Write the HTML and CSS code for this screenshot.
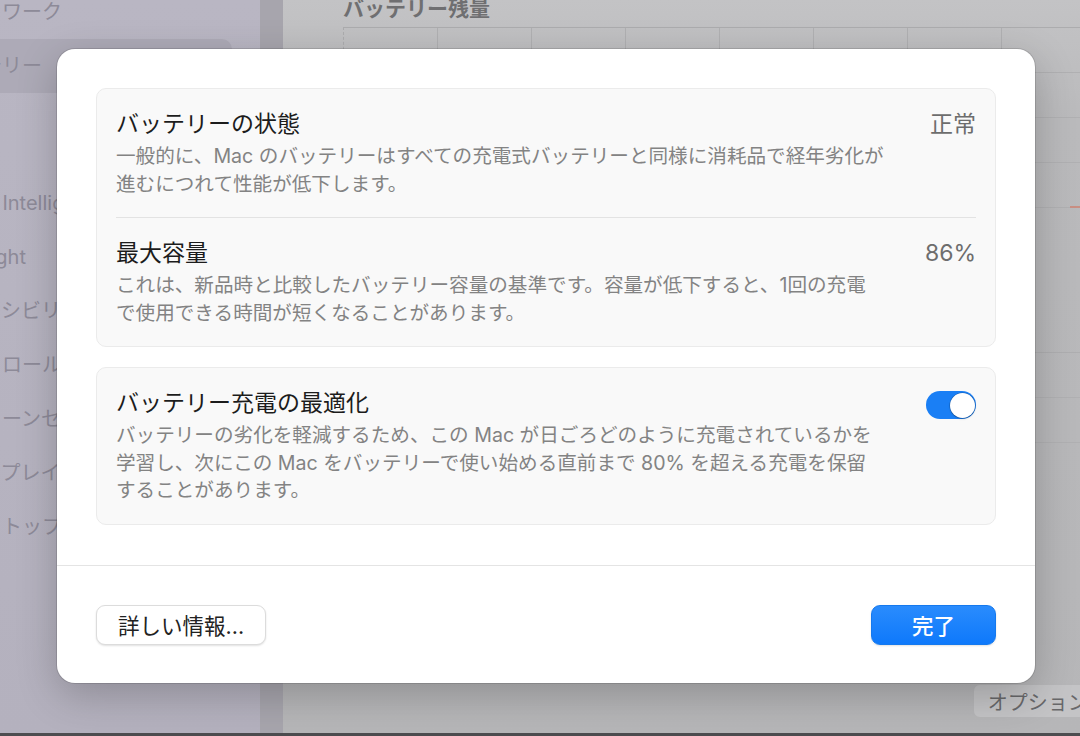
FILE: index.html
```html
<!doctype html>
<html lang="ja">
<head>
<meta charset="UTF-8">
<meta name="viewport" content="width=device-width, initial-scale=1">
<title>バッテリーの状態</title>
<link rel="stylesheet" href="styles.css">
</head>
<body>
<div class="window">
    <aside class="sidebar">
        <div class="side-list">
            <div class="side-item">ネットワーク</div>
            <div class="side-item selected">バッテリー</div>
            <div class="side-gap"></div>
            <div class="side-item">Apple Intelligence</div>
            <div class="side-item">Spotlight</div>
            <div class="side-item">アクセシビリティ</div>
            <div class="side-item">コントロールセンター</div>
            <div class="side-item">スクリーンセーバ</div>
            <div class="side-item">ディスプレイ</div>
            <div class="side-item">デスクトップとDock</div>
        </div>
    </aside>
    <div class="split"></div>
    <main class="content">
        <h2 class="content-title">バッテリー残量</h2>
        <div class="chart">
            <div class="chart-row"></div>
            <div class="chart-row"></div>
            <div class="chart-row"></div>
            <div class="chart-row"><span class="chart-mark"></span></div>
        </div>
        <div class="chart second">
            <div class="chart-row"></div>
            <div class="chart-row"></div>
        </div>
        <div class="content-footer">
            <button class="options-button">オプション...</button>
        </div>
    </main>
</div>
<div class="bottom-edge"></div>

<!-- Battery health sheet -->
<div class="dialog">
    <div class="dialog-body">
        <section class="card">
            <div class="row">
                <div class="row-text">
                    <div class="row-title">バッテリーの状態</div>
                    <div class="row-desc">一般的に、Mac のバッテリーはすべての充電式バッテリーと同様に消耗品で経年劣化が<br>進むにつれて性能が低下します。</div>
                </div>
                <div class="row-value">正常</div>
            </div>
            <div class="row">
                <div class="row-text">
                    <div class="row-title">最大容量</div>
                    <div class="row-desc">これは、新品時と比較したバッテリー容量の基準です。容量が低下すると、1回の充電<br>で使用できる時間が短くなることがあります。</div>
                </div>
                <div class="row-value">86%</div>
            </div>
        </section>
        <section class="card">
            <div class="row">
                <div class="row-text">
                    <div class="row-title">バッテリー充電の最適化</div>
                    <div class="row-desc">バッテリーの劣化を軽減するため、この Mac が日ごろどのように充電されているかを<br>学習し、次にこの Mac をバッテリーで使い始める直前まで 80% を超える充電を保留<br>することがあります。</div>
                </div>
                <div class="toggle on"><span class="knob"></span></div>
            </div>
        </section>
    </div>
    <div class="dialog-footer">
        <button class="btn">詳しい情報...</button>
        <button class="btn primary">完了</button>
    </div>
</div>
</body>
</html>
```

FILE: styles.css
```css
body {
    margin: 0;
    width: 1080px;
    height: 736px;
    overflow: hidden;
    position: relative;
    background: #b9b9bb;
    font-family: Inter, "Noto Sans CJK JP", sans-serif;
}

.window {
    display: flex;
    height: 733px;
}

/* sidebar, scrolled partly out of view */
.sidebar {
    width: 260px;
    background: linear-gradient(180deg, #b9b6c3, #b4b1be);
    overflow: hidden;
}

.side-list {
    margin-top: -15px;
}

.side-item {
    height: 54px;
    line-height: 54px;
    margin-right: 28px;
    text-indent: -58px;
    font-size: 20px;
    color: #8d8a98;
    white-space: nowrap;
    overflow: hidden;
}

.side-item.selected {
    background: #adaab7;
    border-radius: 0 10px 10px 0;
}

.side-gap {
    height: 83px;
}

.split {
    width: 23px;
    background: #a7a5ad;
}

.content {
    flex: 1;
    display: flex;
    flex-direction: column;
    padding-left: 60px;
    background: linear-gradient(180deg, #c3c3c5 0, #bababc 120px, #b6b6b8 100%);
}

.content-title {
    margin: -8px 0 0;
    height: 35px;
    font-size: 21px;
    font-weight: 700;
    color: #6f6f71;
}

.chart {
    border-top: 1px solid #acacae;
    border-left: 1px dashed #acacae;
    background-image: repeating-linear-gradient(90deg, transparent 0, transparent 93px, #b0b0b2 93px, #b0b0b2 94px);
}

.chart-row {
    height: 44px;
    border-bottom: 1px solid #b0b0b2;
    position: relative;
}

.chart-mark {
    position: absolute;
    right: 0;
    bottom: -1px;
    width: 10px;
    height: 2px;
    background: #c98f83;
}

.chart.second {
    margin-top: 144px;
    border-top-color: #aeaeb0;
}

.content-footer {
    margin-top: auto;
    padding-bottom: 15px;
    display: flex;
    justify-content: flex-end;
}

.options-button {
    margin-right: -40px;
    height: 34px;
    padding: 0 14px;
    border: 1px solid #b6b6b8;
    border-radius: 7px;
    background: #c4c4c6;
    font-family: inherit;
    font-size: 20px;
    color: #68686a;
}

.bottom-edge {
    height: 3px;
    background: #4d4d50;
}

/* sheet */
.dialog {
    position: absolute;
    left: 57px;
    top: 49px;
    width: 978px;
    height: 634px;
    display: flex;
    flex-direction: column;
    background: #fff;
    border-radius: 18px;
    box-shadow: 0 0 0 1px rgba(0, 0, 0, 0.12), 0 12px 40px rgba(0, 0, 0, 0.22);
}

.dialog-body {
    padding: 39px 39px 40px;
    display: flex;
    flex-direction: column;
    gap: 20px;
}

.card {
    background: #f9f9f9;
    border: 1px solid #ebebeb;
    border-radius: 10px;
    padding: 0 19px;
}

.row {
    display: flex;
    justify-content: space-between;
    align-items: flex-start;
    padding: 21px 0 19px;
}

.row + .row {
    border-top: 1px solid #e3e3e3;
}

.row-title {
    font-size: 23px;
    line-height: 28px;
    color: #1c1c1c;
}

.row-desc {
    margin-top: 5px;
    font-size: 19.6px;
    line-height: 27.5px;
    color: #838383;
    white-space: nowrap;
}

.row-value {
    font-size: 23px;
    line-height: 28px;
    color: #6d6d6d;
}

.toggle {
    width: 50px;
    height: 28px;
    margin-top: 2px;
    border-radius: 14px;
    background: #d9d9d9;
    display: flex;
    align-items: center;
    padding: 0 1px;
    box-sizing: border-box;
}

.toggle.on {
    background: #1a7ff5;
    justify-content: flex-end;
}

.knob {
    width: 25px;
    height: 25px;
    border-radius: 50%;
    background: #fff;
    box-shadow: 0 0 0 0.5px rgba(0, 0, 0, 0.25), 0 1px 2px rgba(0, 0, 0, 0.2);
}

.dialog-footer {
    border-top: 1px solid #e4e4e4;
    padding: 39px 39px;
    display: flex;
    justify-content: space-between;
}

.btn {
    height: 40px;
    padding: 0 21px;
    border: 1px solid #dcdcdc;
    border-radius: 9px;
    background: #fff;
    box-shadow: 0 1px 2px rgba(0, 0, 0, 0.12);
    font-family: inherit;
    font-size: 21.5px;
    color: #222;
}

.btn.primary {
    width: 125px;
    border-color: #1579ee;
    background: linear-gradient(180deg, #2a8cfd, #0e79fb);
    color: #fff;
    font-weight: 500;
}
```
